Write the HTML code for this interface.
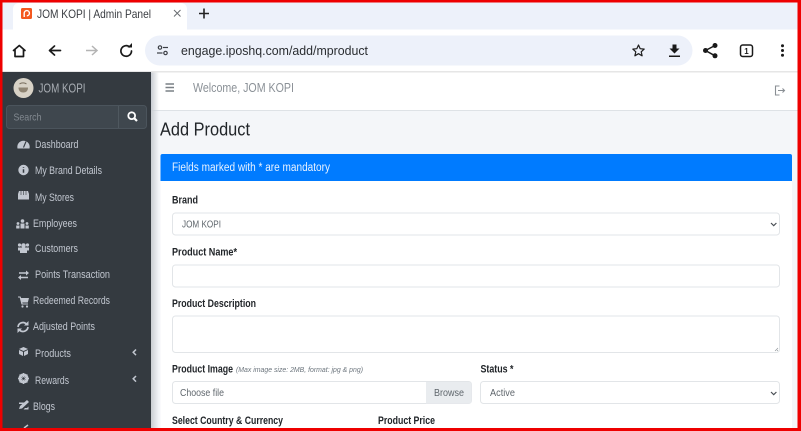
<!DOCTYPE html>
<html lang="en">
<head>
<meta charset="utf-8">
<title>JOM KOPI | Admin Panel</title>
<style>
html,body{margin:0;padding:0;width:801px;height:431px;overflow:hidden;background:#fff}
svg{display:block}
text{font-family:"Liberation Sans",sans-serif}
.soft{filter:blur(.3px)}
.side{fill:#c2c7d0;font-size:11px}
.lab{fill:#212529;font-size:10.8px;font-weight:bold}
.val{fill:#5f666c;font-size:10.5px}
.box{fill:#fff;stroke:#e2e5e8;stroke-width:1}
.ic{fill:#c2c7d0}
.st{fill:none;stroke:#c2c7d0;stroke-width:1.5}
.bk{fill:none;stroke:#1a1a1a;stroke-width:1.7;stroke-linejoin:round;stroke-linecap:round}
</style>
</head>
<body>
<svg width="801" height="431" viewBox="0 0 801 431" xmlns="http://www.w3.org/2000/svg">
<defs>
<linearGradient id="sh" x1="0" x2="1" y1="0" y2="0"><stop offset="0" stop-color="#c9cdd2"/><stop offset="1" stop-color="#c9cdd2" stop-opacity="0"/></linearGradient>
</defs>
<g class="soft">
<!-- browser chrome -->
<rect width="801" height="431" fill="#fff"/>
<rect x="0" y="0" width="801" height="29.5" fill="#edf1fa"/>
<path d="M13 29.5V9a6 6 0 0 1 6-6H181a6 6 0 0 1 6 6V29.5Z" fill="#fff"/>
<rect x="21" y="8" width="11" height="11" rx="1.5" fill="#f4581f"/>
<path d="M24.2 17V13.2a2.6 2.6 0 1 1 2.6 2.6" fill="none" stroke="#fff" stroke-width="1.4"/>
<text x="37" y="18" font-size="12" fill="#3a3d42" textLength="114" lengthAdjust="spacingAndGlyphs">JOM KOPI | Admin Panel</text>
<path d="M174 10L180.500 16.500M180.500 10L174 16.500" stroke="#6a6d72" stroke-width="1" fill="none"/>
<path d="M204 8.500V18.500M199 13.500H209" stroke="#222" stroke-width="1.600" fill="none"/>

<rect x="0" y="29.500" width="801" height="42" fill="#fff"/>
<rect x="0" y="71" width="801" height="1.500" fill="#e6e6e6"/>
<path class="bk" d="M13.500 50.500L19.300 45.500L25 50.500M15 49.500V56.500H23.500V49.500" />
<path class="bk" d="M60.500 50.500H50M54.500 46L49.500 50.500L54.500 55"/>
<path d="M97 50.500H86M92 46L97 50.500L92 55" fill="none" stroke="#b4b4b4" stroke-width="1.500"/>
<path class="bk" d="M131.500 51a5.300 5.300 0 1 1-2-4.200"/>
<path d="M127.500 47.500h4.500v-4.500z" fill="#1a1a1a"/>

<rect x="145" y="35.500" width="547.500" height="30" rx="15" fill="#edf1fa"/>
<g fill="none" stroke="#3b3e44" stroke-width="1.200">
<circle cx="160" cy="47.500" r="1.700"/><path d="M163 47.500H168"/>
<circle cx="165.500" cy="53" r="1.700"/><path d="M157 53H162.500"/>
</g>
<text x="181" y="55" font-size="13" fill="#2a2d31" textLength="187" lengthAdjust="spacingAndGlyphs">engage.iposhq.com/add/mproduct</text>
<path d="M638.500 45l1.700 3.700 4 .4-3 2.700.9 4-3.600-2.100-3.600 2.100.9-4-3-2.700 4-.4z" fill="none" stroke="#1d1d1d" stroke-width="1.200" stroke-linejoin="round"/>
<path d="M672.500 44.500h4v4h3l-5 5-5-5h3z" fill="#1a1a1a"/>
<rect x="669" y="55.500" width="11" height="1.500" fill="#1a1a1a"/>
<g fill="#1a1a1a"><circle cx="715" cy="45.500" r="2.500"/><circle cx="705.500" cy="50.500" r="2.500"/><circle cx="715" cy="55.800" r="2.500"/></g>
<path d="M715 45.500L705.500 50.500L715 55.800" fill="none" stroke="#1a1a1a" stroke-width="1.500"/>
<rect x="740.500" y="45" width="12" height="11.500" rx="2.200" fill="none" stroke="#1a1a1a" stroke-width="1.500"/>
<text x="746.500" y="54" font-size="8" font-weight="bold" text-anchor="middle" fill="#1a1a1a">1</text>
<g fill="#1a1a1a"><circle cx="782.500" cy="45.700" r="1.500"/><circle cx="782.500" cy="50.500" r="1.500"/><circle cx="782.500" cy="55.300" r="1.500"/></g>

<!-- page -->
<rect x="151" y="72.500" width="650" height="360" fill="#f4f6f9"/>
<rect x="151" y="72.500" width="650" height="37.500" fill="#fff"/>
<rect x="151" y="110" width="650" height="1" fill="#dee2e6"/>
<rect x="151" y="72.500" width="8" height="360" fill="url(#sh)"/>
<path d="M165.500 84h8.500M165.500 87.500h8.500M165.500 91h8.500" stroke="#7a8086" stroke-width="1.400" fill="none"/>
<text x="193" y="92" font-size="13" fill="#8b9197" textLength="101" lengthAdjust="spacingAndGlyphs">Welcome, JOM KOPI</text>
<path d="M779.500 86h-4v9h4" fill="none" stroke="#8a8f94" stroke-width="1.100"/>
<path d="M778 90.500h6.500M782.500 88.500l2 2-2 2" fill="none" stroke="#8a8f94" stroke-width="1.100"/>

<text x="160" y="135.500" font-size="18.500" fill="#212529" textLength="90" lengthAdjust="spacingAndGlyphs">Add Product</text>

<!-- card -->
<rect x="160.500" y="154" width="631.500" height="280" rx="2" fill="#fff"/>
<path d="M160.500 181V156a2 2 0 0 1 2-2H790a2 2 0 0 1 2 2V181Z" fill="#007bff"/>
<text x="172" y="171" font-size="11.500" fill="#e8f2ff" textLength="158" lengthAdjust="spacingAndGlyphs">Fields marked with * are mandatory</text>

<text class="lab" x="172" y="203.500" textLength="26" lengthAdjust="spacingAndGlyphs">Brand</text>
<rect class="box" x="172.500" y="213" width="607" height="22" rx="3"/>
<text class="val" x="182" y="227.500" textLength="39" lengthAdjust="spacingAndGlyphs">JOM KOPI</text>
<path d="M771 223l2.700 2.700L776.400 223" fill="none" stroke="#4a4f55" stroke-width="1.200"/>

<text class="lab" x="172" y="255.500" textLength="65" lengthAdjust="spacingAndGlyphs">Product Name*</text>
<rect class="box" x="172.500" y="265" width="607" height="22" rx="3"/>

<text class="lab" x="172" y="307" textLength="84" lengthAdjust="spacingAndGlyphs">Product Description</text>
<rect class="box" x="172.500" y="316" width="607" height="36.500" rx="3"/>
<path d="M775 351l3-3M777 351l1-1" stroke="#8a8f94" stroke-width=".6" fill="none"/>

<text class="lab" x="172" y="372.500" textLength="61" lengthAdjust="spacingAndGlyphs">Product Image</text>
<text x="236" y="372" font-size="7.500" font-style="italic" fill="#6c757d" textLength="127" lengthAdjust="spacingAndGlyphs">(Max image size: 2MB, format: jpg &amp; png)</text>
<rect class="box" x="172.500" y="381.500" width="299" height="22" rx="3"/>
<path d="M426 382h43a2.500 2.500 0 0 1 2.500 2.500v16.500a2.500 2.500 0 0 1-2.500 2.500h-43Z" fill="#e9ecef"/>
<text class="val" x="180" y="396" textLength="44" lengthAdjust="spacingAndGlyphs">Choose file</text>
<text class="val" x="434" y="396" textLength="30" lengthAdjust="spacingAndGlyphs">Browse</text>

<text class="lab" x="480.500" y="372.500" textLength="33" lengthAdjust="spacingAndGlyphs">Status *</text>
<rect class="box" x="480.500" y="381.500" width="299" height="22" rx="3"/>
<text class="val" x="490" y="396" textLength="25" lengthAdjust="spacingAndGlyphs">Active</text>
<path d="M771 392l2.700 2.700L776.400 392" fill="none" stroke="#4a4f55" stroke-width="1.200"/>

<text class="lab" x="172" y="424" textLength="111" lengthAdjust="spacingAndGlyphs">Select Country &amp; Currency</text>
<text class="lab" x="378" y="424" textLength="57" lengthAdjust="spacingAndGlyphs">Product Price</text>

<!-- sidebar -->
<rect x="0" y="72" width="151" height="360" fill="#343a40"/>
<circle cx="23.500" cy="88" r="10" fill="#d8d2c6"/>
<path d="M18.500 87.500h9.500c0 3.500-2 5-4.700 5s-4.800-1.500-4.800-5z" fill="#8f8472"/>
<path d="M19.500 84c2-1.500 5-1.500 7 0" fill="none" stroke="#776c5c" stroke-width="1"/>
<text x="38.500" y="92.500" font-size="13" fill="#a9aeb4" textLength="47" lengthAdjust="spacingAndGlyphs">JOM KOPI</text>

<rect x="6.500" y="105.500" width="140" height="23" rx="3" fill="#3f474e" stroke="#4b545c"/>
<rect x="118" y="106" width="1" height="22" fill="#4f585f"/>
<text x="13.500" y="120.500" font-size="10.500" fill="#838a91" textLength="28" lengthAdjust="spacingAndGlyphs">Search</text>
<circle cx="131.700" cy="115.700" r="3.400" fill="none" stroke="#fff" stroke-width="1.800"/>
<path d="M134.200 118.200L137 121" stroke="#fff" stroke-width="2.200"/>

<!-- dashboard -->
<path class="ic" d="M17.500 148.500a6.200 6.200 0 1 1 12 0Z"/>
<path d="M23.500 147.500L26 141.500" stroke="#343a40" stroke-width="1.100"/>
<text class="side" x="35" y="148" textLength="43.500" lengthAdjust="spacingAndGlyphs">Dashboard</text>
<!-- info -->
<circle class="ic" cx="23.500" cy="170" r="5.200"/>
<path d="M23.500 167v.8M23.500 169.300v3.500" stroke="#343a40" stroke-width="1.500"/>
<text class="side" x="35" y="174" textLength="67" lengthAdjust="spacingAndGlyphs">My Brand Details</text>
<!-- store -->
<path class="ic" d="M19 191h9l1 3v5.500H18V194Z"/>
<path d="M21 191v4M23.500 191v4M26 191v4" stroke="#343a40" stroke-width=".6"/>
<text class="side" x="35" y="201" textLength="39" lengthAdjust="spacingAndGlyphs">My Stores</text>
<!-- employees -->
<g class="ic"><circle cx="22.500" cy="221" r="1.800"/><circle cx="18" cy="223.500" r="1.400"/><circle cx="27" cy="223.500" r="1.400"/><rect x="20.500" y="223.500" width="4" height="5"/><rect x="16.200" y="225.500" width="3.300" height="3"/><rect x="25.500" y="225.500" width="3.300" height="3"/></g>
<text class="side" x="33" y="227" textLength="44" lengthAdjust="spacingAndGlyphs">Employees</text>
<!-- customers -->
<g class="ic"><circle cx="23.500" cy="245.500" r="2.300"/><circle cx="19.500" cy="245" r="1.600"/><circle cx="27.500" cy="245" r="1.600"/><path d="M18 247.500h11v3h-11Z"/><path d="M20 250h7v3h-7Z"/></g>
<text class="side" x="35" y="252" textLength="43" lengthAdjust="spacingAndGlyphs">Customers</text>
<!-- points -->
<path d="M19 273h8M19 277.500h9" class="st"/>
<path class="ic" d="M26 270.500l3 2.500-3 2.500ZM21 275l-3 2.500 3 2.500Z"/>
<text class="side" x="35" y="278" textLength="75" lengthAdjust="spacingAndGlyphs">Points Transaction</text>
<!-- cart -->
<path class="ic" d="M18 296.500h2.500l.6 1.500H29l-1.200 4.500h-5.500l.3 1h5.400v1h-6.500L19.700 297.500H18Z"/>
<circle class="ic" cx="22.500" cy="306.500" r="1.100"/><circle class="ic" cx="27" cy="306.500" r="1.100"/>
<text class="side" x="33" y="304" textLength="77" lengthAdjust="spacingAndGlyphs">Redeemed Records</text>
<!-- sync -->
<path d="M18 327a5 5 0 0 1 8.500-3M28 327a5 5 0 0 1-8.500 3" fill="none" stroke="#c2c7d0" stroke-width="1.700"/>
<path class="ic" d="M28.500 321v4.500H24ZM17.500 333v-4.500H22Z"/>
<text class="side" x="33" y="330" textLength="62" lengthAdjust="spacingAndGlyphs">Adjusted Points</text>
<!-- box -->
<path class="ic" d="M23.500 347l4.500 2-4.500 2-4.500-2ZM19 350l4 1.900v4.100l-4-2ZM28 350l-4 1.900v4.100l4-2Z"/>
<text class="side" x="35" y="357" textLength="36" lengthAdjust="spacingAndGlyphs">Products</text>
<path d="M136 349.500l-2.800 2.800 2.800 2.800" fill="none" stroke="#c2c7d0" stroke-width="1.500"/>
<!-- gear -->
<circle cx="23.500" cy="378.500" r="3.800" fill="none" stroke="#c2c7d0" stroke-width="2.600"/>
<path d="M23.500 373v11M18 378.500h11M19.600 374.600l7.800 7.800M27.400 374.600l-7.800 7.800" stroke="#c2c7d0" stroke-width="1.300"/>
<circle cx="23.500" cy="378.500" r="1.300" fill="#343a40"/>
<text class="side" x="35" y="384" textLength="34" lengthAdjust="spacingAndGlyphs">Rewards</text>
<path d="M136 376l-2.800 2.800 2.800 2.800" fill="none" stroke="#c2c7d0" stroke-width="1.500"/>
<!-- blogs -->
<path class="ic" d="M19 409l1-3 7-6 2 2-7 6.500ZM19 402.500h5l-1.500 1.500H19ZM28.500 405.500v4h-5l1.500-1.500h2l1.500-1.500Z"/>
<text class="side" x="33" y="410" textLength="22" lengthAdjust="spacingAndGlyphs">Blogs</text>
<path d="M24 428l4-3" stroke="#c2c7d0" stroke-width="1.500"/>
</g>
<!-- red frame -->
<rect x="1.250" y="1.250" width="797.500" height="428" fill="none" stroke="#ee0000" stroke-width="2.500"/>
<rect x="798" y="0" width="3" height="431" fill="#ee0000"/>
<rect x="0" y="428" width="801" height="3" fill="#ee0000"/>
</svg>
</body>
</html>
